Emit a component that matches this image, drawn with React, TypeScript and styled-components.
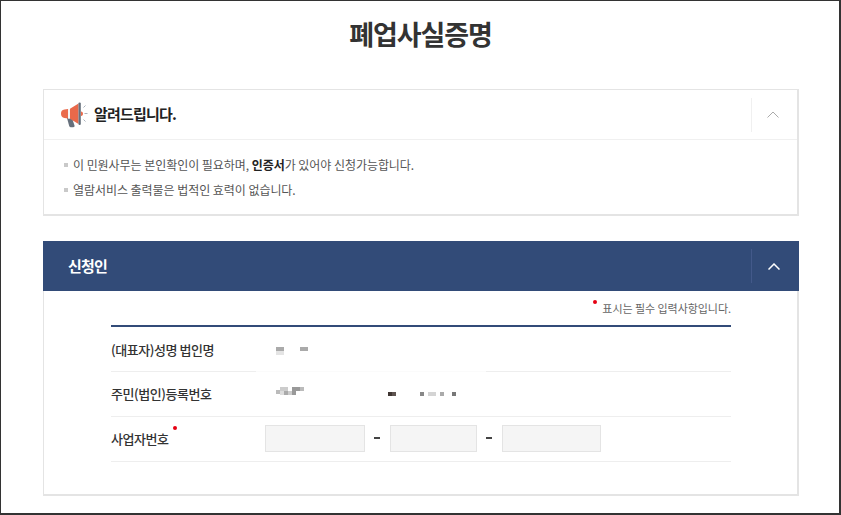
import { createGlobalStyle, styled } from "styled-components";

const GlobalStyle = createGlobalStyle`
  html, body {
    margin: 0;
    padding: 0;
    background: #fff;
  }
  body {
    font-family: "Noto Sans CJK KR", "Noto Sans", sans-serif;
    color: #333;
  }
`;

const Frame = styled.div`
  box-sizing: border-box;
  width: 841px;
  height: 515px;
  overflow: hidden;
  border-style: solid;
  border-color: #333;
  border-width: 1px 2px 2px 1px;
  padding: 0 41px 0 42px;
`;

const Title = styled.h1`
  margin: 0;
  height: 88px;
  padding-top: 13px;
  box-sizing: border-box;
  font-size: 27px;
  line-height: 40px;
  font-weight: 700;
  letter-spacing: -1.1px;
  text-align: center;
  color: #333;
`;

const Card = styled.section`
  box-sizing: border-box;
  width: 756px;
  height: 127px;
  border: 1px solid #e4e4e4;
  border-bottom-width: 2px;
  border-right-width: 2px;
`;

const NoticeHead = styled.div`
  box-sizing: border-box;
  height: 50px;
  display: flex;
  align-items: center;
  padding-left: 16px;
  border-bottom: 1px solid #f0f0f0;
`;

const NoticeTitle = styled.h2`
  flex: 1;
  margin: 0 0 2px 6px;
  font-size: 15px;
  font-weight: 700;
  letter-spacing: -0.8px;
  color: #222;
`;

const Toggle = styled.div<{ $dark?: boolean }>`
  box-sizing: border-box;
  width: ${(p) => (p.$dark ? 48 : 46)}px;
  height: 34px;
  padding-right: 3px;
  display: flex;
  align-items: center;
  justify-content: center;
  border-left: 1px solid ${(p) => (p.$dark ? "#43598a" : "#f0f0f0")};
`;

const NoticeList = styled.ul`
  list-style: none;
  margin: 0;
  padding: 12px 0 0 20px;
`;

const NoticeItem = styled.li`
  display: flex;
  align-items: center;
  height: 25px;
  font-size: 12px;
  letter-spacing: -0.05px;
  color: #555;
  &::before {
    content: "";
    width: 4px;
    height: 4px;
    margin-right: 5px;
    background: #c9c9c9;
  }
  b {
    font-weight: 700;
    color: #222;
  }
`;

const Panel = styled.section`
  box-sizing: border-box;
  width: 756px;
  height: 255px;
  margin-top: 25px;
  border: 1px solid #e4e4e4;
  border-top: 0;
  border-right-width: 2px;
  border-bottom-width: 2px;
`;

const PanelHead = styled.div`
  box-sizing: border-box;
  width: 756px;
  height: 50px;
  margin-left: -1px;
  display: flex;
  align-items: center;
  padding-left: 25px;
  background: #324b78;
`;

const PanelTitle = styled.h2`
  flex: 1;
  margin: 0 0 2px;
  font-size: 15px;
  font-weight: 700;
  letter-spacing: -0.8px;
  color: #fff;
`;

const FormArea = styled.div`
  width: 620px;
  margin-left: 67px;
`;

const Required = styled.p`
  margin: 0;
  height: 34px;
  display: flex;
  align-items: center;
  justify-content: flex-end;
  padding-bottom: 1px;
  box-sizing: border-box;
  font-size: 11px;
  letter-spacing: -0.05px;
  color: #666;
`;

const RedDot = styled.span<{ $top: number; $left: number }>`
  position: absolute;
  top: ${(p) => p.$top}px;
  left: ${(p) => p.$left}px;
  width: 4px;
  height: 4px;
  border-radius: 50%;
  background: #e60012;
`;

const RequiredText = styled.span`
  position: relative;
  padding-left: 9px;
`;

const Table = styled.div`
  border-top: 2px solid #324b78;
`;

const Row = styled.div`
  position: relative;
  display: grid;
  grid-template-columns: 154px 1fr;
  align-items: center;
  height: 45px;
  box-sizing: border-box;
  border-bottom: 1px solid #eee;
`;

const LineMask = styled.span`
  position: absolute;
  left: 145px;
  right: 245px;
  bottom: -1px;
  height: 1px;
  background: #fbfbfb;
`;

const Label = styled.div<{ $lift?: number }>`
  position: relative;
  margin-bottom: ${(p) => p.$lift ?? 0}px;
  font-size: 13px;
  font-weight: 500;
  letter-spacing: -0.45px;
  color: #333;
`;

const Value = styled.div<{ $lift?: number; $drop?: number }>`
  display: flex;
  align-items: center;
  margin-top: ${(p) => p.$drop ?? 0}px;
  margin-bottom: ${(p) => p.$lift ?? 0}px;
`;

const Field = styled.input<{ $w: number }>`
  box-sizing: border-box;
  width: ${(p) => p.$w}px;
  height: 27px;
  padding: 0;
  border: 1px solid #e4e4e4;
  background: #f5f5f5;
`;

const Dash = styled.span`
  width: 6px;
  height: 2px;
  margin: 0 10px 0 9px;
  background: #444;
`;

const Blur = styled.svg`
  display: block;
  flex: none;
  margin-left: 11px;
`;

const Chevron = ({ color, width }: { color: string; width: number }) => (
  <svg width="12" height="7" viewBox="0 0 12 7" fill="none">
    <path d="M.5 6.500 6 1l5.500 5.500" stroke={color} strokeWidth={width} />
  </svg>
);

const Megaphone = () => (
  <svg width="28" height="26" viewBox="0 0 28 26">
    <path d="M7 16h5l2.500 7.500c.3 1-.4 1.700-1.300 1.700h-2.400c-.8 0-1.300-.4-1.600-1.200z" fill="#66707c" />
    <path d="M4.500 7.500 8 7v9.500l-3.500-.5C2 15.500 1 14 1 11.700s1-4 3.500-4.200z" fill="#ea6b4c" />
    <rect x="8" y="6.800" width="2" height="9.900" fill="#f4f4f4" />
    <path d="M10 6.800 18.500 1.500v20.500L10 16.700z" fill="#e9694a" />
    <rect x="18.500" y="0.500" width="2.300" height="22.500" rx="1.100" fill="#66707c" />
    <path d="M21 9.500c1.500.2 2 1 2 2.200s-.5 2-2 2.200z" fill="#ea6b4c" />
    <path d="M23.500 5.500 25.500 3.500M24.500 11.500H27.500M23.500 17.500l2 2" stroke="#a9b1bb" strokeWidth="1" />
  </svg>
);

type Cell = [number, number, number, string];

// pixelated blocks standing in for the masked personal data
const Mosaic = ({ w, h, cells }: { w: number; h: number; cells: Cell[] }) => (
  <Blur width={w} height={h} viewBox={`0 0 ${w} ${h}`}>
    {cells.map(([x, y, cw, fill], i) => (
      <rect key={i} x={x} y={y} width={cw} height={4} fill={fill} />
    ))}
  </Blur>
);

const nameCells: Cell[] = [
  [0, 0, 8, "#aaa"],
  [0, 4, 8, "#e4e4e4"],
  [24, 0, 8, "#aaa"],
];

const idCells: Cell[] = [
  [4, 0, 8, "#ccc"],
  [16, 0, 8, "#999"],
  [24, 0, 4, "#bbb"],
  [0, 3, 4, "#bbb"],
  [4, 4, 4, "#ddd"],
  [8, 4, 4, "#aaa"],
  [12, 4, 4, "#ccc"],
  [16, 4, 4, "#999"],
  [112, 5, 4, "#3f3632"],
  [116, 5, 4, "#5e5450"],
  [144, 5, 4, "#888"],
  [152, 5, 8, "#d4d4d4"],
  [164, 5, 4, "#aaa"],
  [176, 5, 4, "#777"],
];

export default function App() {
  return (
    <>
      <GlobalStyle />
      <Frame>
        <Title>폐업사실증명</Title>
        <Card>
          <NoticeHead>
            <Megaphone />
            <NoticeTitle>알려드립니다.</NoticeTitle>
            <Toggle>
              <Chevron color="#aaa" width={1} />
            </Toggle>
          </NoticeHead>
          <NoticeList>
            <NoticeItem>
              <span>
                이 민원사무는 본인확인이 필요하며, <b>인증서</b>가 있어야 신청가능합니다.
              </span>
            </NoticeItem>
            <NoticeItem>열람서비스 출력물은 법적인 효력이 없습니다.</NoticeItem>
          </NoticeList>
        </Card>
        <Panel>
          <PanelHead>
            <PanelTitle>신청인</PanelTitle>
            <Toggle $dark>
              <Chevron color="#fff" width={1.5} />
            </Toggle>
          </PanelHead>
          <FormArea>
            <Required>
              <RequiredText>
                <RedDot $top={0} $left={0} />
                표시는 필수 입력사항입니다.
              </RequiredText>
            </Required>
            <Table>
              <Row>
                <Label>(대표자)성명 법인명</Label>
                <Value $drop={4}>
                  <Mosaic w={32} h={8} cells={nameCells} />
                </Value>
                <LineMask />
              </Row>
              <Row>
                <Label $lift={2}>주민(법인)등록번호</Label>
                <Value $lift={6}>
                  <Mosaic w={182} h={9} cells={idCells} />
                </Value>
              </Row>
              <Row>
                <Label $lift={2}>
                  사업자번호
                  <RedDot $top={-3} $left={62} />
                </Label>
                <Value $lift={2}>
                  <Field $w={100} />
                  <Dash />
                  <Field $w={87} />
                  <Dash />
                  <Field $w={99} />
                </Value>
              </Row>
            </Table>
          </FormArea>
        </Panel>
      </Frame>
    </>
  );
}
